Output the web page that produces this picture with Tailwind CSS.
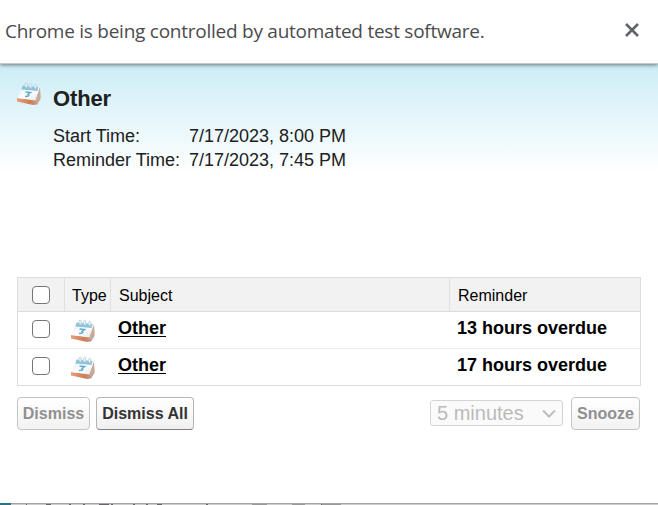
<!DOCTYPE html>
<html lang="en">
<head>
<meta charset="utf-8">
<title>Reminders</title>
<script src="https://cdn.jsdelivr.net/npm/@tailwindcss/browser@4"></script>
</head>
<body class="w-[658px] h-[505px] overflow-hidden bg-white font-['Liberation_Sans',sans-serif] text-black">
<svg class="absolute size-0">
  <defs>
    <linearGradient id="base" x1="0" y1="0" x2="1" y2="0"><stop offset="0" stop-color="#e6a27c"/><stop offset=".55" stop-color="#d07c55"/><stop offset="1" stop-color="#b9aaa2"/></linearGradient>
    <linearGradient id="page" x1="0" y1="0" x2="1" y2="1"><stop offset="0" stop-color="#dcebf2"/><stop offset=".5" stop-color="#ffffff"/><stop offset="1" stop-color="#dfe7ea"/></linearGradient>
    <filter id="soft" x="-10%" y="-10%" width="120%" height="120%"><feGaussianBlur stdDeviation=".45"/></filter>
    <symbol id="event" viewBox="0 0 26 26">
      <g filter="url(#soft)">
        <path d="M1 17 L19 19 L24 9 L24.500 18 L21 23.500 L17 24 L1 20.500Z" fill="url(#base)"/>
        <path d="M6 5 L24 6 L19.500 19.500 L1.500 17Z" fill="url(#page)"/>
        <path d="M24 6 L24.500 17 L20.500 22 L19.500 19.500Z" fill="#c9aa98"/>
        <path d="M6.500 4.500 L22.500 6 L21.500 10 L5.500 8.500Z" fill="#8fc3da"/>
        <path d="M8.500 5 Q9.500 0 11.500 3 L11 7M13 5.500 Q14.500 0 16 3.500 L15.500 7.500M18 6 Q19.500 1.500 21 4.500 L20 8" fill="#e4f0f5" stroke="#b5d2df" stroke-width=".8"/>
        <path d="M9.500 11 L14.500 11.500 L12 13.300 Q14.500 15.500 9 15.500" fill="none" stroke="#62acd0" stroke-width="1.600"/>
      </g>
    </symbol>
  </defs>
</svg>
<div class="flex flex-col h-[505px]">
  <header class="relative z-10 h-[64px] shrink-0 flex items-center justify-between pl-[5px] pr-[19px] bg-white border-b border-[#c4c8ca] shadow-[0_1px_4px_rgba(0,0,0,0.5)]">
    <span class="font-['Open_Sans',sans-serif] text-[19px] leading-[26px] text-[#4b4b4d] whitespace-nowrap tracking-[-0.25px] -mt-[2px]">Chrome is being controlled by automated test software.</span>
    <svg class="size-[14px] -mt-[3px]" viewBox="0 0 14 14" fill="none" stroke="#5f6368" stroke-width="2.600"><path d="M1 1 L13 13M13 1 L1 13"/></svg>
  </header>
  <main class="flex-1 flex flex-col pl-[17px] pr-[17px] bg-[linear-gradient(to_bottom,#cdedf6_0,#d3eff7_15px,#ffffff_110px)]">
    <section class="h-[213px] shrink-0 flex pt-[17px]">
      <svg class="w-[26px] h-[26px] -ml-[1px] mr-[11px]"><use href="#event"/></svg>
      <div class="text-[#202020]">
        <h1 class="font-bold text-[22px] leading-[26px] pt-[5px] tracking-[-0.15px]">Other</h1>
        <dl class="grid grid-cols-[136px_auto] text-[18px] leading-[24px] mt-[12px] whitespace-nowrap">
          <dt>Start Time:</dt><dd>7/17/2023, 8:00 PM</dd>
          <dt>Reminder Time:</dt><dd>7/17/2023, 7:45 PM</dd>
        </dl>
      </div>
    </section>
    <section class="h-[109px] shrink-0 border border-[#dcdcdc] bg-white">
      <div class="grid grid-cols-[47px_46px_339px_1fr] grid-rows-[33px] h-[34px] bg-[#f2f2f2] border-b border-[#dcdcdc] text-[16px] leading-[35px]">
        <div class="border-r border-[#e0e0e0] flex items-center pl-[14px]"><span class="size-[18px] rounded-[4px] border-[1.5px] border-[#767676] bg-white"></span></div>
        <div class="border-r border-[#e0e0e0] pl-[7px]">Type</div>
        <div class="border-r border-[#e0e0e0] pl-[8px]">Subject</div>
        <div class="pl-[8px]">Reminder</div>
      </div>
      <div class="grid grid-cols-[47px_46px_339px_1fr] h-[37px] border-b border-[#ececec] text-[18px] leading-[33px] font-bold">
        <div class="flex items-start pt-[8px] pl-[14px]"><span class="size-[18px] rounded-[4px] border-[1.5px] border-[#767676] bg-white"></span></div>
        <div class="pl-[5px] pt-[6px]"><svg class="w-[26px] h-[26px]"><use href="#event"/></svg></div>
        <div class="pl-[7px]"><a class="underline decoration-[1px] underline-offset-[2px]">Other</a></div>
        <div class="pl-[7px]">13 hours overdue</div>
      </div>
      <div class="grid grid-cols-[47px_46px_339px_1fr] h-[36px] text-[18px] leading-[33px] font-bold">
        <div class="flex items-start pt-[8px] pl-[14px]"><span class="size-[18px] rounded-[4px] border-[1.5px] border-[#767676] bg-white"></span></div>
        <div class="pl-[5px] pt-[6px]"><svg class="w-[26px] h-[26px]"><use href="#event"/></svg></div>
        <div class="pl-[7px]"><a class="underline decoration-[1px] underline-offset-[2px]">Other</a></div>
        <div class="pl-[7px]">17 hours overdue</div>
      </div>
    </section>
    <section class="flex items-start pt-[11px] pr-[1px] text-[16px] font-bold whitespace-nowrap">
      <button class="w-[73px] h-[33px] rounded-[4px] border border-[#c4c4c4] bg-linear-to-b from-white to-[#f2f2f2] text-[#909090]">Dismiss</button>
      <button class="w-[98px] h-[33px] ml-[6px] rounded-[4px] border border-[#b5b5b5] border-b-[#7f7f7f] bg-linear-to-b from-white to-[#f0f0f0] text-[#333333]">Dismiss All</button>
      <div class="ml-auto mt-[3px] w-[133px] h-[26px] rounded-[3px] border border-[#d5d5d5] bg-[#fafafa] text-[#bababa] flex items-center justify-between pl-[6px] pr-[6px] font-normal text-[20px] leading-[24px]">5 minutes<svg class="w-[14px] h-[9px]" viewBox="0 0 14 9" fill="none" stroke="#bdbdbd" stroke-width="2"><path d="M1 1.500 L7 7.500 L13 1.500"/></svg></div>
      <button class="w-[69px] h-[33px] ml-[8px] rounded-[4px] border border-[#c4c4c4] bg-linear-to-b from-white to-[#f2f2f2] text-[#909090]">Snooze</button>
    </section>
  </main>
  <footer class="h-[2px] shrink-0">
    <svg class="block" width="658" height="2" shape-rendering="crispEdges">
      <rect width="658" height="1" fill="#a3a3a3"/><rect y="1" width="658" height="1" fill="#cdcdcd"/>
      <rect width="11" height="2" fill="#287486"/>
      <path d="M26 1.500h1M46 1.500h5M69 1.500h2M83 1.500h2M99 1.500h10M111 1.500h2M133 1.500h2M146 1.500h2M157 1.500h5M206 1.500h2M321 1.500h1" stroke="#686468"/>
      <path d="M252 1.500h15M292 1.500h13M322 1.500h19" stroke="#999999"/>
    </svg>
  </footer>
</div>
</body>
</html>
